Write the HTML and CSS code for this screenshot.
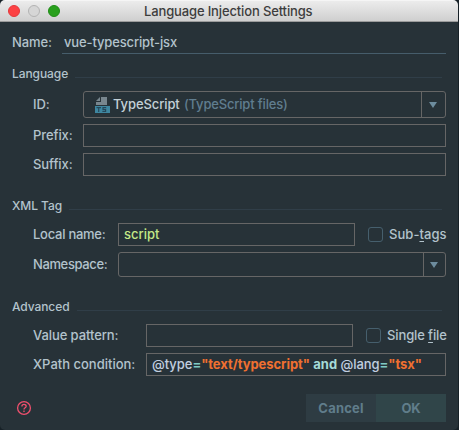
FILE: index.html
```html
<!DOCTYPE html>
<html lang="en">
<head>
<meta charset="utf-8">
<title>Language Injection Settings</title>
<link rel="stylesheet" href="styles.css">
</head>
<body>
<div class="window">
  <header class="titlebar">
    <div class="lights"><i class="light close"></i><i class="light minimize"></i><i class="light zoom"></i></div>
    <h1 class="title">Language Injection Settings</h1>
  </header>
  <main class="content">
    <div class="name-row">
      <label class="name-label">Name:</label>
      <div class="name-field"><span class="name-value">vue-typescript-jsx</span></div>
    </div>

    <section class="group language">
      <h2 class="group-title">Language</h2>
      <div class="row">
        <label>ID:</label>
        <div class="combo">
          <div class="combo-value">
            <svg class="file-icon" width="15" height="16" viewBox="0 0 15 16" shape-rendering="crispEdges">
              <path d="M6 0H12V8H1V5H6Z" fill="#78868e"/>
              <path d="M1 4L5 0V4Z" fill="#78868e" shape-rendering="auto"/>
              <path d="M0 9H15V16H0Z" fill="#3e86a0"/>
              <path d="M1.5 10.7H6M3.7 10.7V15M11.2 10.7H8V12.7H10.6V14.5H7.4" fill="none" stroke="#25485a" stroke-width="1.2" shape-rendering="auto"/>
            </svg>
            <span class="type-name">TypeScript</span><span class="type-hint">(TypeScript files)</span>
          </div>
          <div class="combo-arrow"><svg width="8" height="6" viewBox="0 0 8 6"><path d="M0 0H8L4 6Z" fill="#6d8c9e"/></svg></div>
        </div>
      </div>
      <div class="row"><label>Prefix:</label><div class="input"></div></div>
      <div class="row"><label>Suffix:</label><div class="input"></div></div>
    </section>

    <section class="group xml">
      <h2 class="group-title">XML Tag</h2>
      <div class="row">
        <label class="t-local">Local name:</label>
        <div class="input"><span class="script">script</span></div>
        <div class="check"><i class="box"></i><span class="t-sub">Sub-<u>t</u>ags</span></div>
      </div>
      <div class="row">
        <label class="t-namespace">Namespace:</label>
        <div class="combo">
          <div class="combo-value"></div>
          <div class="combo-arrow"><svg width="8" height="6" viewBox="0 0 8 6"><path d="M0 0H8L4 6Z" fill="#6d8c9e"/></svg></div>
        </div>
      </div>
    </section>

    <section class="group advanced">
      <h2 class="group-title">Advanced</h2>
      <div class="row">
        <label>Value pattern:</label>
        <div class="input"></div>
        <div class="check"><i class="box"></i><span class="t-single">Single <u>f</u>ile</span></div>
      </div>
      <div class="row">
        <label class="t-xpath">XPath condition:</label>
        <div class="input"><span class="xpath"><span class="attr">@type</span><b class="op">=</b><b class="str">"text/typescript"</b> <b class="kw">and</b> <span class="attr">@lang</span><b class="op">=</b><b class="str">"tsx"</b></span></div>
      </div>
    </section>
  </main>
  <footer class="footer">
    <svg class="help" width="16" height="16" viewBox="0 0 16 16" fill="none" stroke="#f0506e">
      <circle cx="8" cy="8" r="6.4" stroke-width="1.3"/>
      <path d="M5.9 6.5C5.9 3.7 10.2 3.8 10.2 6.3C10.2 7.8 8 7.9 8 9.5M8 10.6V12" stroke-width="1.3"/>
    </svg>
    <div class="buttons">
      <div class="button cancel">Cancel</div><div class="button ok">OK</div>
    </div>
  </footer>
</div>
</body>
</html>
```
FILE: styles.css
```css
* { box-sizing: border-box; }
body {
  margin: 0;
  background: #172127;
  color: #b3c3cc;
  font: 450 13px/16px Inter, "Liberation Sans", sans-serif;
  letter-spacing: -0.08px;
  white-space: nowrap;
}
.window {
  width: 458px;
  height: 430px;
  display: flex;
  flex-direction: column;
  background: #273238;
  border-radius: 5px;
  overflow: hidden;
}
.titlebar {
  height: 22px;
  flex: none;
  display: grid;
  grid-template-columns: 144px 1fr;
  align-items: center;
  background: linear-gradient(#ececec, #cfcfcf);
  border-top: 1px solid #f5f5f5;
  border-bottom: 1px solid #9b9b9b;
}
.lights { display: flex; gap: 8px; padding-left: 8px; }
.light { width: 12px; height: 12px; border-radius: 50%; border: 1px solid; }
.close { background: #fc4244; border-color: #e2393c; }
.minimize { background: #d6d6d6; border-color: #b3b3b3; }
.zoom { background: #29a01d; border-color: #208c17; }
.title { margin: 0; font-size: 13px; font-weight: 450; line-height: 20px; letter-spacing: -0.14px; color: #3d3d3d; }
.content { flex: none; height: 354px; padding: 11px 12px 0; }
.name-row { display: flex; height: 21px; }
.name-label { width: 50px; line-height: 19px; }
.name-field { width: 384px; padding-left: 2px; line-height: 19px; border-bottom: 1px solid #465d6b; }
.name-value { letter-spacing: -0.14px; }
.group-title {
  display: flex;
  width: 430px;
  height: 16px;
  margin: 0 0 9px;
  font-size: 12px;
  font-weight: 450;
}
.group-title::after { content: ""; flex: 1; height: 1px; margin: 11px 0 0 7px; background: #303e48; }
.group { padding-top: 16px; }
.language { padding-top: 12px; }
.row {
  display: grid;
  align-items: center;
  width: 434px;
  padding-left: 21px;
  margin-bottom: 6px;
}
.row label, .check span, .combo-value span { padding-bottom: 1px; }
.language .row { grid-template-columns: 50px 1fr; }
.xml .row { grid-template-columns: 85px 237px 1fr; }
.xml .row .combo { grid-column: 2 / 4; }
.advanced .row { grid-template-columns: 113px 207px 1fr; }
.advanced .row:last-child .input { grid-column: 2 / 4; }
.input { height: 23px; border: 1px solid #666666; padding-left: 5px; line-height: 21px; }
.combo { display: flex; height: 27px; border: 1px solid #666666; border-radius: 3px; }
.xml .combo { height: 25px; }
.combo-value { flex: 1; display: flex; align-items: center; padding-left: 11px; }
.combo-arrow { width: 24px; border-left: 1px solid #666666; padding-left: 7px; display: flex; align-items: center; }
.xml .combo-arrow { width: 22px; padding-left: 6px; }
.file-icon { margin-right: 3px; }
.type-name { color: #c3d0d7; width: 71px; letter-spacing: -0.1px; }
.type-hint { color: #607d8f; letter-spacing: -0.18px; }
.script { color: #c3e887; letter-spacing: 0; }
.t-local { letter-spacing: -0.26px; }
.t-namespace { letter-spacing: -0.38px; }
.t-xpath { letter-spacing: 0; }
.check { display: flex; align-items: center; padding-left: 13px; }
.box { width: 15px; height: 15px; border: 1px solid #465f6d; border-radius: 3px; margin-right: 6px; }
u { text-decoration: underline; text-underline-offset: 2px; }
.t-sub { letter-spacing: 0.05px; }
.t-single { letter-spacing: -0.12px; }
.xpath { letter-spacing: -0.05px; }
.attr { color: #c2cfe0; }
.op { color: #80cbc4; }
.str { color: #f07030; }
.kw { color: #a5dcd8; }
.footer { flex: 1; display: flex; justify-content: space-between; padding: 18px 12px 0 16px; }
.help { margin-top: 6px; }
.buttons { display: flex; }
.button {
  width: 70px;
  height: 28px;
  display: flex;
  align-items: center;
  justify-content: center;
  font-weight: 700;
  color: #607d8b;
  background: #2e3c43;
}
.cancel { letter-spacing: 0.2px; }
.ok { background: #304549; }
```
